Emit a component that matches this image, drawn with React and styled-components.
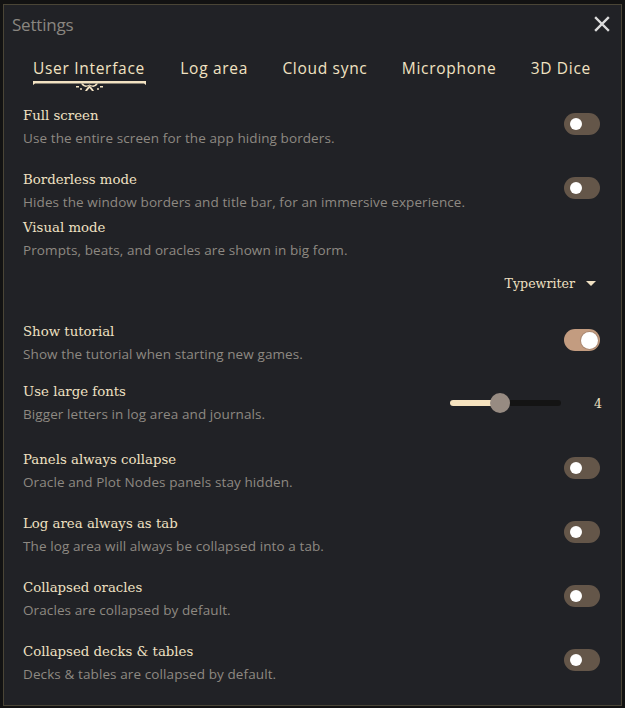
import React from "react";
import styled, { createGlobalStyle } from "styled-components";

const Global = createGlobalStyle`
  html, body { margin: 0; padding: 0; background: #121212; }
  * { box-sizing: border-box; }
`;

const Frame = styled.div`
  margin: 4px 3px 0 3px;
  width: 619px;
  height: 702px;
  border: 1px solid #4a4536;
  background: #212226;
  display: flex;
  flex-direction: column;
`;

const Header = styled.div`
  display: flex;
  align-items: center;
  justify-content: space-between;
  height: 38px;
  padding: 0 10px 0 8px;
`;

const Title = styled.div`
  font-family: "Open Sans", "Noto Sans", sans-serif;
  font-size: 17px;
  color: #8a8680;
  letter-spacing: -0.2px;
`;

const Close = styled.button`
  background: none;
  border: 0;
  padding: 0;
  width: 18px;
  height: 18px;
  display: flex;
  align-items: center;
  justify-content: center;
  cursor: pointer;
`;

const Tabs = styled.div`
  display: flex;
  justify-content: space-between;
  padding: 14px 30px 0 29px;
  height: 63px;
`;

const Tab = styled.div`
  display: flex;
  flex-direction: column;
  align-items: stretch;
  font-family: "Open Sans", "Noto Sans", sans-serif;
  font-size: 15.5px;
  letter-spacing: 0.7px;
  color: #f2e2c2;
  line-height: 22px;
`;

const Ornament = styled.svg`
  display: block;
  margin-top: 1px;
`;

const List = styled.div`
  display: flex;
  flex-direction: column;
  padding: 0 21px 0 19px;
`;

const Row = styled.div`
  display: flex;
  justify-content: space-between;
  align-items: ${(p) => (p.$center ? "center" : "flex-start")};
  margin-top: ${(p) => p.$gap}px;
`;

const Texts = styled.div`
  display: flex;
  flex-direction: column;
  gap: 2px;
`;

const RowTitle = styled.div`
  font-family: "DejaVu Serif", "Liberation Serif", serif;
  font-size: 13.3px;
  line-height: 20px;
  color: #efe0c2;
`;

const Desc = styled.div`
  font-family: "Open Sans", "Noto Sans", sans-serif;
  font-size: 13.5px;
  line-height: 20px;
  color: #8e8982;
  letter-spacing: 0.1px;
`;

const Switch = styled.div`
  width: 36px;
  height: 22px;
  border-radius: 11px;
  margin-top: 7px;
  background: ${(p) => (p.$on ? "#c39c80" : "#645649")};
  display: flex;
  align-items: center;
  justify-content: ${(p) => (p.$on ? "flex-end" : "flex-start")};
  padding: ${(p) => (p.$on ? "0 2px" : "0 6px")};
`;

const Knob = styled.div`
  width: ${(p) => (p.$on ? 17 : 12)}px;
  height: ${(p) => (p.$on ? 17 : 12)}px;
  border-radius: 50%;
  background: #ffffff;
  box-shadow: ${(p) => (p.$on ? "0 0 0 1px #a98770" : "none")};
`;

const DropRow = styled.div`
  display: flex;
  justify-content: flex-end;
  align-items: center;
  gap: 11px;
  margin-top: 13px;
  padding-right: 4px;
  height: 20px;
`;

const DropLabel = styled.span`
  font-family: "DejaVu Serif", "Liberation Serif", serif;
  font-size: 12.6px;
  color: #efe0c2;
`;

const Caret = styled.span`
  width: 0;
  height: 0;
  border-left: 5px solid transparent;
  border-right: 5px solid transparent;
  border-top: 5px solid #efe0c2;
`;

const SliderWrap = styled.div`
  display: flex;
  align-items: center;
  gap: 31px;
  margin-right: -4px;
`;

const Track = styled.div`
  position: relative;
  width: 111px;
  height: 6px;
  border-radius: 3px;
  background: #141414;
`;

const Fill = styled.div`
  height: 100%;
  border-radius: 3px;
  background: #f6e3bf;
`;

const Thumb = styled.div`
  position: absolute;
  top: 50%;
  width: 20px;
  height: 20px;
  margin: -10px 0 0 -10px;
  border-radius: 50%;
  background: #978b82;
`;

const Value = styled.span`
  font-family: "DejaVu Serif", "Liberation Serif", serif;
  font-size: 12.6px;
  color: #efe0c2;
  width: 12px;
  text-align: center;
`;

const rows1 = [
  { t: "Full screen", d: "Use the entire screen for the app hiding borders.", gap: 0 },
  { t: "Borderless mode", d: "Hides the window borders and title bar, for an immersive experience.", gap: 22 },
];

const rows2 = [
  { t: "Panels always collapse", d: "Oracle and Plot Nodes panels stay hidden.", gap: 26 },
  { t: "Log area always as tab", d: "The log area will always be collapsed into a tab.", gap: 22 },
  { t: "Collapsed oracles", d: "Oracles are collapsed by default.", gap: 22 },
  { t: "Collapsed decks & tables", d: "Decks & tables are collapsed by default.", gap: 22 },
];

function Toggle({ on }) {
  return (
    <Switch $on={on}>
      <Knob $on={on} />
    </Switch>
  );
}

function Setting({ t, d, gap, children, center }) {
  return (
    <Row $gap={gap} $center={center}>
      <Texts>
        <RowTitle>{t}</RowTitle>
        <Desc>{d}</Desc>
      </Texts>
      {children}
    </Row>
  );
}

function TabOrnament() {
  const c = "#f2e2c2";
  return (
    <Ornament width="113" height="12" viewBox="0 0 113 12">
      <path d="M0 1 L113 1 L113 5 L111 3.6 L2 3.6 L0 5 Z" fill={c} />
      <path
        d="M48 3.6 C50 7 53 8 56.5 5.5 C60 8 63 7 65 3.6 L63 3.6 C61.5 6 59 6 56.5 4.5 C54 6 51.5 6 50 3.6 Z"
        fill={c}
      />
      <path d="M52 11 C53.5 8 55.5 6.5 56.5 5.5 C57.5 6.5 59.5 8 61 11 L59 11 L56.5 8 L54 11 Z" fill={c} />
      <rect x="43" y="6" width="3" height="1.5" fill={c} />
      <rect x="67" y="6" width="3" height="1.5" fill={c} />
      <circle cx="48" cy="9" r="1" fill={c} />
      <circle cx="65" cy="9" r="1" fill={c} />
    </Ornament>
  );
}

export default function App() {
  const tabs = ["User Interface", "Log area", "Cloud sync", "Microphone", "3D Dice"];
  return (
    <>
      <Global />
      <Frame>
        <Header>
          <Title>Settings</Title>
          <Close aria-label="Close">
            <svg width="16" height="16" viewBox="0 0 16 16">
              <path d="M2 2 L14 14 M14 2 L2 14" stroke="#dcdcdc" strokeWidth="2.4" strokeLinecap="square" />
            </svg>
          </Close>
        </Header>
        <Tabs>
          {tabs.map((t, i) => (
            <Tab key={t}>
              {t}
              {i === 0 && <TabOrnament />}
            </Tab>
          ))}
        </Tabs>
        <List>
          {rows1.map((r) => (
            <Setting key={r.t} {...r}>
              <Toggle on={false} />
            </Setting>
          ))}
          <Setting t="Visual mode" d="Prompts, beats, and oracles are shown in big form." gap={6} />
          <DropRow>
            <DropLabel>Typewriter</DropLabel>
            <Caret />
          </DropRow>
          <Setting t="Show tutorial" d="Show the tutorial when starting new games." gap={29}>
            <Toggle on={true} />
          </Setting>
          <Setting t="Use large fonts" d="Bigger letters in log area and journals." gap={18} center>
            <SliderWrap>
              <Track>
                <Fill style={{ width: "45%" }} />
                <Thumb style={{ left: "45%" }} />
              </Track>
              <Value>4</Value>
            </SliderWrap>
          </Setting>
          {rows2.map((r) => (
            <Setting key={r.t} {...r}>
              <Toggle on={false} />
            </Setting>
          ))}
        </List>
      </Frame>
    </>
  );
}
